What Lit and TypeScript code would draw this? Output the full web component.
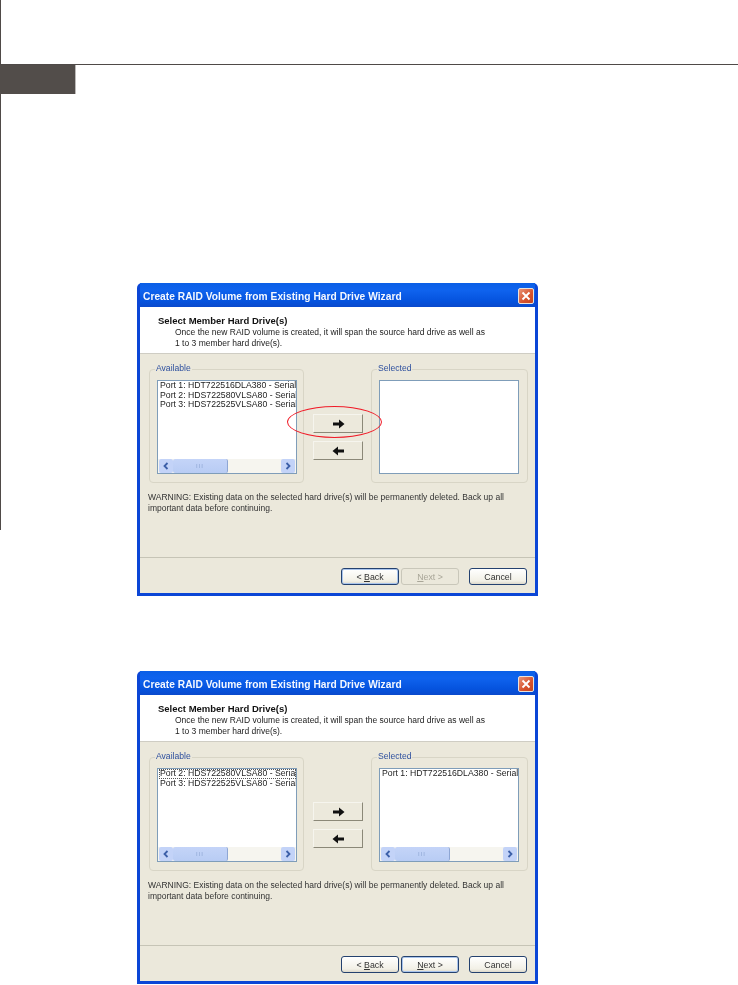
import { LitElement, html, css, svg } from "lit";
import { customElement, property } from "lit/decorators.js";

const chevron = (dir: "l" | "r") => html`<svg class="chev" viewBox="0 0 8 8" width="8" height="8">
  <path d=${dir === "l" ? "M5.5 1 L2.5 4 L5.5 7" : "M2.5 1 L5.5 4 L2.5 7"} fill="none" stroke="#3b5fa8" stroke-width="1.8"/>
</svg>`;

const arrow = (dir: "l" | "r") => svg`<svg viewBox="0 0 13 10" width="13" height="10">
  <path d=${dir === "r" ? "M1 3.4H7V0.5L12.5 5L7 9.5V6.6H1Z" : "M12 3.4H6V0.5L0.5 5L6 9.5V6.6H12Z"} fill="#111"/>
</svg>`;

@customElement("wizard-window")
class WizardWindow extends LitElement {
  @property({ type: Array }) available: string[] = [];
  @property({ type: Array }) selected: string[] = [];
  @property({ type: Boolean }) done = false;
  @property({ type: Boolean }) ring = false;

  static styles = css`
    :host { display: block; width: 401px; height: 313px; font-family: "Liberation Sans", Arial, sans-serif; }
    .win { position: relative; box-sizing: border-box; width: 100%; height: 100%; display: flex; flex-direction: column;
      background: #0b46d6; border-radius: 5px 5px 0 0; padding: 0 3px 3px; filter: blur(0.35px); }
    .title { height: 23px; flex: none; display: flex; align-items: center; justify-content: space-between; padding: 1px 1px 0 3px;
      background: linear-gradient(#0a5fe6, #0f63ee 30%, #0553de 75%, #0a49cc); color: #f4f8ff; font-weight: bold; font-size: 10.2px; letter-spacing: 0.04px; }
    .title span { padding-top: 1px; }
    .close { width: 16px; height: 16px; box-sizing: border-box; border: 1px solid #e9e2dc; border-radius: 2px; background: linear-gradient(135deg, #e89478, #d6512c 60%, #c44520); display: flex; align-items: center; justify-content: center; }
    .head { height: 47px; flex: none; box-sizing: border-box; background: #fff; border-bottom: 1px solid #cfcdc4; color: #222; font-size: 8.5px; line-height: 11px; padding: 8px 0 0 18px; }
    .head b { display: block; color: #111; font-size: 9.5px; line-height: 12px; font-weight: bold; }
    .head p { margin: 0; padding-left: 17px; }
    .body { flex: 1; background: #ebe8db; display: flex; flex-direction: column; }
    .main { flex: 1; padding: 15px 0 0 9px; }
    .cols { display: flex; align-items: flex-start; }
    .group { position: relative; box-sizing: border-box; height: 114px; width: 155px; border: 1px solid #d8d5c6; border-radius: 4px; padding: 10px 6px 8px 7px; }
    .group.right { width: 157px; margin-left: 8px; padding-right: 8px; }
    .legend { position: absolute; left: 5px; top: -7px; padding: 0 1px; background: #ebe8db; color: #2d4f9e; font-size: 8.6px; line-height: 11px; }
    .list { box-sizing: border-box; height: 100%; background: #fff; border: 1px solid #7f9db9; display: flex; flex-direction: column; overflow: hidden; }
    .items { flex: 1; padding: 0 0 0 2px; font-size: 8.7px; line-height: 9.7px; color: #222; white-space: nowrap; }
    .item.focus { outline: 1px dotted #555; outline-offset: -1px; margin-left: -1px; padding-left: 1px; }
    .sb { height: 14px; flex: none; display: flex; align-items: stretch; background: #f6f5ef; padding: 0 1px; }
    .sb .btn { width: 14px; flex: none; background: #c3d3f8; border-radius: 2px; display: flex; align-items: center; justify-content: center; }
    .sb .thumb { width: 55px; background: linear-gradient(#c4d4f8, #b8ccf4); border-radius: 2px; border-right: 1px solid #8ea6d4; box-sizing: border-box; display: flex; align-items: center; justify-content: center; color: #8ea6d4; font-size: 6px; letter-spacing: 1px; }
    .sb .track { flex: 1; }
    .moves { width: 50px; margin-left: 9px; padding-top: 45px; display: flex; flex-direction: column; gap: 8px; }
    .move { height: 19px; box-sizing: border-box; background: #ece9dc; border: 1px solid; border-color: #f6f5ee #8b8878 #8b8878 #f6f5ee; display: flex; align-items: center; justify-content: center; }
    .warn { margin: 9px 0 0 -1px; color: #333; font-size: 8.5px; line-height: 11px; }
    .foot { height: 36px; flex: none; box-sizing: border-box; border-top: 1px solid #c6c4b6; padding: 10px 8px 0 0; display: flex; justify-content: flex-end; }
    .wb { box-sizing: border-box; width: 58px; height: 17px; border: 1px solid #24416f; border-radius: 3px; background: linear-gradient(#fff, #f2f0e6 80%, #dcd8cb); color: #333; font-size: 8.8px; display: flex; align-items: center; justify-content: center; }
    .wb.def { box-shadow: inset 0 0 0 1px #a9c4ec; }
    .wb.off { border-color: #c9c7ba; background: #ebe8db; color: #a9a698; }
    .wb.gap { margin-left: 2px; }
    .wb.cancel { margin-left: 10px; }
    .wb u { text-underline-offset: 1px; }
    .ring { position: absolute; left: 150px; top: 123px; width: 95px; height: 32px; border: 1px solid #f01c28; border-radius: 50%; box-sizing: border-box; }
  `;

  private listbox(items: string[], focus: boolean, bar: boolean) {
    return html`<div class="list">
      <div class="items">${items.map((t, i) => html`<div class="item ${focus && i === 0 ? "focus" : ""}">${t}</div>`)}</div>
      ${bar ? html`<div class="sb"><div class="btn">${chevron("l")}</div><div class="thumb">III</div><div class="track"></div><div class="btn">${chevron("r")}</div></div>` : ""}
    </div>`;
  }

  render() {
    return html`<div class="win">
      <div class="title"><span>Create RAID Volume from Existing Hard Drive Wizard</span>
        <div class="close"><svg viewBox="0 0 10 10" width="10" height="10"><path d="M1.5 1.5L8.5 8.5M8.5 1.5L1.5 8.5" stroke="#fff" stroke-width="1.9"/></svg></div>
      </div>
      <div class="head"><b>Select Member Hard Drive(s)</b>
        <p>Once the new RAID volume is created, it will span the source hard drive as well as<br>1 to 3 member hard drive(s).</p>
      </div>
      <div class="body">
        <div class="main">
          <div class="cols">
            <div class="group"><span class="legend">Available</span>${this.listbox(this.available, this.done, true)}</div>
            <div class="moves">
              <div class="move">${arrow("r")}</div>
              <div class="move">${arrow("l")}</div>
            </div>
            <div class="group right"><span class="legend">Selected</span>${this.listbox(this.selected, false, this.done)}</div>
          </div>
          <div class="warn">WARNING: Existing data on the selected hard drive(s) will be permanently deleted. Back up all<br>important data before continuing.</div>
        </div>
        <div class="foot">
          <div class="wb ${this.done ? "" : "def"}">&lt;&nbsp;<u>B</u>ack</div>
          <div class="wb gap ${this.done ? "def" : "off"}"><u>N</u>ext&nbsp;&gt;</div>
          <div class="wb cancel">Cancel</div>
        </div>
      </div>
      ${this.ring ? html`<div class="ring"></div>` : ""}
    </div>`;
  }
}

@customElement("app-root")
class AppRoot extends LitElement {
  static styles = css`
    :host { display: block; width: 738px; height: 985px; background: #fff; overflow: hidden; }
    .top { height: 64px; width: 1px; background: #4f4a48; }
    .band { height: 30px; border-top: 1px solid #4f4a48; box-sizing: border-box; }
    .tab { width: 76px; height: 29px; box-sizing: border-box; background: #524d4a; border-right: 1px solid #bdbab8; }
    .page { display: flex; }
    .spine { width: 1px; height: 436px; flex: none; background: #4f4a48; }
    .sheets { margin-left: 136px; padding-top: 189px; display: flex; flex-direction: column; gap: 75px; }
  `;
  render() {
    const p1 = "Port 1: HDT722516DLA380 - Serial";
    const p2 = "Port 2: HDS722580VLSA80 - Serial";
    const p3 = "Port 3: HDS722525VLSA80 - Serial";
    return html`
      <div class="top"></div>
      <div class="band"><div class="tab"></div></div>
      <div class="page">
        <div class="spine"></div>
        <div class="sheets">
          <wizard-window .available=${[p1, p2, p3]} .selected=${[]} ring></wizard-window>
          <wizard-window .available=${[p2, p3]} .selected=${[p1]} done></wizard-window>
        </div>
      </div>`;
  }
}
